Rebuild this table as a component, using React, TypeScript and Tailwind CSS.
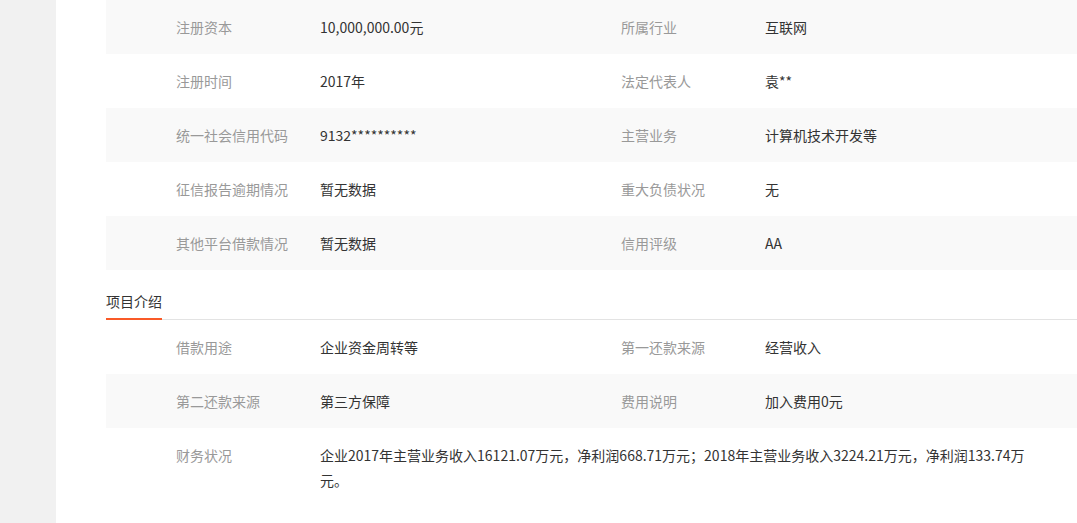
const font = {
  fontFamily: '"Microsoft YaHei", "Noto Sans CJK SC", "Liberation Sans", sans-serif',
};

type Pair = [string, string];

const companyRows: [Pair, Pair][] = [
  [["注册资本", "10,000,000.00元"], ["所属行业", "互联网"]],
  [["注册时间", "2017年"], ["法定代表人", "袁**"]],
  [["统一社会信用代码", "9132**********"], ["主营业务", "计算机技术开发等"]],
  [["征信报告逾期情况", "暂无数据"], ["重大负债状况", "无"]],
  [["其他平台借款情况", "暂无数据"], ["信用评级", "AA"]],
];

const projectRows: [Pair, Pair][] = [
  [["借款用途", "企业资金周转等"], ["第一还款来源", "经营收入"]],
  [["第二还款来源", "第三方保障"], ["费用说明", "加入费用0元"]],
];

const Row = ({ cells, gray }: { cells: [Pair, Pair]; gray: boolean }) => (
  <div className={`flex h-[54px] items-center pl-[70px] text-[14px] ${gray ? "bg-[#f9f9f9]" : "bg-white"}`}>
    <div className="w-[144px] text-[#999]">{cells[0][0]}</div>
    <div className="w-[301px] text-[#333]">{cells[0][1]}</div>
    <div className="w-[144px] text-[#999]">{cells[1][0]}</div>
    <div className="text-[#333]">{cells[1][1]}</div>
  </div>
);

const App = () => {
  return (
    <div className="flex min-h-[523px] bg-white" style={font}>
      <div className="w-[56px] shrink-0 bg-[#f1f1f1]" />
      <div className="flex-1 pl-[50px]">
        {companyRows.map((r, i) => (
          <Row key={i} cells={r} gray={i % 2 === 0} />
        ))}

        <div className="mt-[30px] flex h-[20px] items-end border-b border-[#e3e3e3]">
          <div className="relative -mb-px border-b-2 border-[#f95a28] pb-[7px] text-[14px] leading-[20px] text-[#333]">
            项目介绍
          </div>
        </div>

        {projectRows.map((r, i) => (
          <Row key={i} cells={r} gray={i % 2 === 1} />
        ))}

        <div className="flex pl-[70px] pt-[15px] text-[14px] leading-[25px]">
          <div className="w-[144px] shrink-0 text-[#999]">财务状况</div>
          <div className="w-[725px] text-[#333]">
            企业2017年主营业务收入16121.07万元，净利润668.71万元；2018年主营业务收入3224.21万元，净利润133.74万元。
          </div>
        </div>
      </div>
    </div>
  );
};

export default App;
